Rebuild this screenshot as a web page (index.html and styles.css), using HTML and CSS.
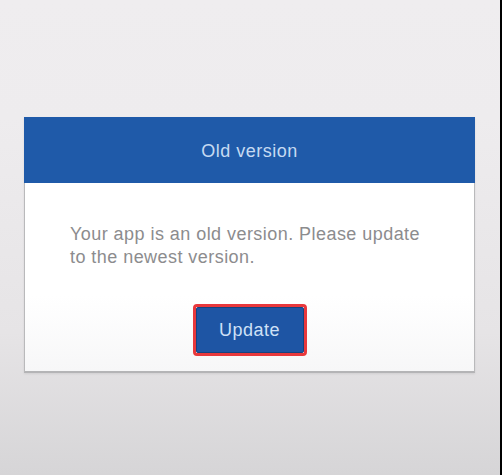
FILE: index.html
```html
<!DOCTYPE html>
<html>
<head>
<meta charset="utf-8">
<link rel="stylesheet" href="styles.css">
</head>
<body>
<div class="screen">
  <div class="dialog">
    <div class="dialog-header">Old version</div>
    <div class="dialog-body">
      <p class="message">Your app is an old version. Please update to the newest version.</p>
      <div class="actions">
        <span class="highlight"><button class="btn">Update</button></span>
      </div>
    </div>
  </div>
</div>
</body>
</html>
```
FILE: styles.css
```css
html, body {
  margin: 0;
  padding: 0;
}
body {
  font-family: "Liberation Sans", Arial, sans-serif;
}
.screen {
  box-sizing: border-box;
  width: 502px;
  height: 475px;
  border-right: 2px solid #000;
  background: linear-gradient(#efedef 0%, #eeecee 25%, #e6e4e6 70%, #d6d5d7 100%);
  padding-top: 117px;
  padding-left: 24px;
}
.dialog {
  width: 451px;
  box-sizing: border-box;
  background: #fff;
  border: 1px solid #b9b9bb;
  border-top: none;
  border-bottom: 2px solid #b4b4b6;
  box-shadow: 0 1px 2px rgba(0,0,0,0.08);
}
.dialog-header {
  height: 66px;
  padding-top: 3px;
  box-sizing: border-box;
  background: #1f5aa9;
  color: #c6daf2;
  font-size: 18px;
  letter-spacing: 0.5px;
  display: flex;
  align-items: center;
  justify-content: center;
  margin: 0 -1px;
}
.dialog-body {
  padding: 40px 38px 15px 45px;
  background: linear-gradient(#ffffff 60%, #f7f7f8 100%);
}
.message {
  margin: 0;
  font-size: 18px;
  letter-spacing: 0.45px;
  line-height: 23px;
  color: #8c8c8e;
}
.actions {
  display: flex;
  justify-content: center;
  margin-top: 35px;
  margin-left: -7px;
}
.highlight {
  display: inline-flex;
  border: 3px solid #e8383c;
  border-radius: 4px;
}
.btn {
  width: 108px;
  height: 46px;
  box-sizing: border-box;
  border: 1px solid #17427f;
  border-radius: 2px;
  background: #1e55a4;
  color: #cfe1f7;
  font-family: "Liberation Sans", Arial, sans-serif;
  font-size: 18px;
  letter-spacing: 0.5px;
  padding: 0;
}
```
